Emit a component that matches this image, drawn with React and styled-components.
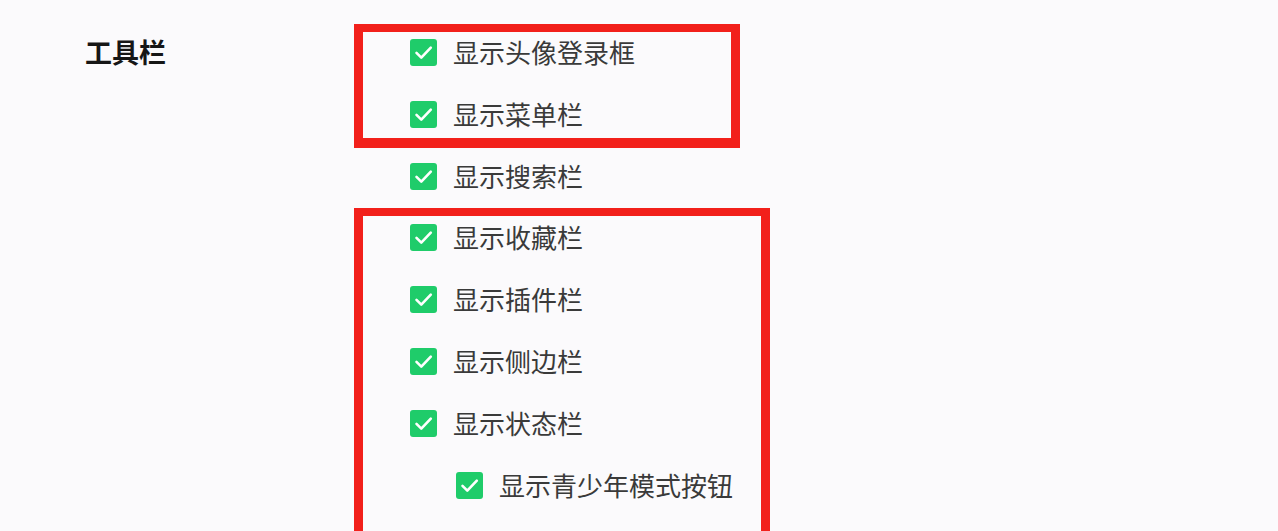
import React from 'react';
import styled, { createGlobalStyle } from 'styled-components';

const GlobalStyle = createGlobalStyle`
    html, body {
        margin: 0;
        padding: 0;
        background: #fbfafc;
    }
    body {
        font-family: "Noto Sans CJK SC", "Noto Sans", sans-serif;
        color: #3a3a3a;
    }
`;

const Page = styled.div`
    display: flex;
    width: 1278px;
    height: 531px;
    overflow: hidden;
    background: #fbfafc;
`;

const Title = styled.div`
    width: 269px;
    padding: 32px 0 0 85px;
    font-size: 27px;
    font-weight: 700;
    line-height: 40px;
    color: #161616;
`;

const List = styled.div`
    display: flex;
    flex-direction: column;
    padding-top: 24px;
`;

const Frame = styled.div`
    width: ${p => p.width}px;
    box-sizing: border-box;
    border: 9px solid #f2201b;
    border-top-width: 8px;
    border-bottom-width: 10px;
    padding: ${p => p.pad};
    display: flex;
    flex-direction: column;
    gap: 22px;
`;

const Row = styled.label`
    display: flex;
    align-items: center;
    gap: 16px;
    height: 40px;
    margin: ${p => p.spacing || '0'};
    margin-left: ${p => p.indent}px;
    font-size: 26px;
    line-height: 40px;
    color: #3a3a3a;
    white-space: nowrap;
`;

const Box = styled.span`
    width: 27px;
    height: 27px;
    border-radius: 3px;
    background: #1fcc6a;
    display: flex;
    align-items: center;
    justify-content: center;
    flex-shrink: 0;
`;

const Check = () => (
    <svg width="27" height="27" viewBox="0 0 27 27">
        <path d="M6.5 13.8 L11.3 18.6 L20.8 8.6" fill="none" stroke="#fff" strokeWidth="2.6" strokeLinecap="round" strokeLinejoin="round" />
    </svg>
);

const Item = ({ label, indent = 47, spacing }) => (
    <Row indent={indent} spacing={spacing}>
        <Box><Check /></Box>
        <span>{label}</span>
    </Row>
);

const App = () => (
    <Page>
        <GlobalStyle />
        <Title>工具栏</Title>
        <List>
            <Frame width={386} pad="0 0 4px 0">
                <Item label="显示头像登录框" />
                <Item label="显示菜单栏" />
            </Frame>
            <Item label="显示搜索栏" indent={56} spacing="8px 0 12px 0" />
            <Frame width={416} pad="1px 0 40px 0">
                <Item label="显示收藏栏" />
                <Item label="显示插件栏" />
                <Item label="显示侧边栏" />
                <Item label="显示状态栏" />
                <Item label="显示青少年模式按钮" indent={93} />
            </Frame>
        </List>
    </Page>
);

export default App;
